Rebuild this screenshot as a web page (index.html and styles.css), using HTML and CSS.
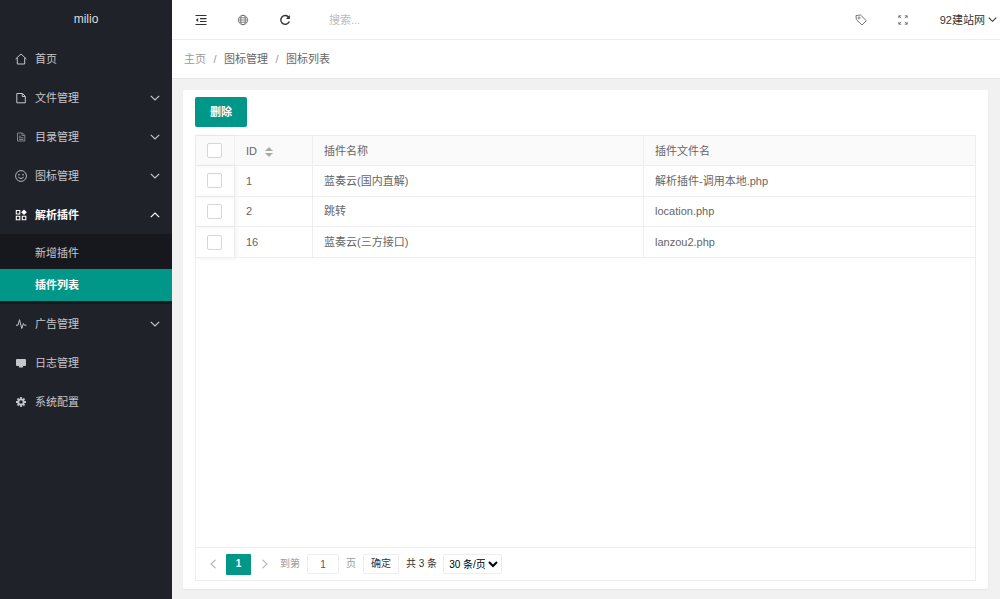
FILE: index.html
```html
<!DOCTYPE html>
<html lang="zh-CN">
<head>
<meta charset="utf-8">
<title>milio</title>
<link rel="stylesheet" href="styles.css">
</head>
<body>
<svg class="sprite" aria-hidden="true">
  <symbol id="down" viewBox="0 0 10 10"><path d="M.8 2.800 5 7l4.200-4.200" fill="none" stroke="currentColor" stroke-width="1.200"/></symbol>
  <symbol id="left" viewBox="0 0 10 10"><path d="M7.500.8 3 5l4.500 4.200" fill="none" stroke="currentColor" stroke-width="1.200"/></symbol>
</svg>
<div class="app">
  <aside class="sidebar">
    <div class="logo">milio</div>
    <nav>
      <a class="item" href="#"><svg class="icon" viewBox="0 0 12 12"><path d="M.6 6 6 1l5.400 5M2.300 5v6h7.400V5" fill="none" stroke="currentColor"/></svg><span>首页</span></a>
      <a class="item" href="#"><svg class="icon" viewBox="0 0 12 12"><path d="M1.800 1.500h5.700l2.800 2.800v6.500H1.800zM7.300 1.500v3h3" fill="none" stroke="currentColor"/></svg><span>文件管理</span><svg class="arrow"><use href="#down"/></svg></a>
      <a class="item" href="#"><svg class="icon dim" viewBox="0 0 12 12"><path d="M2.500 2h5l2.300 2.300V10H2.500zM7 2v2.500h2.500M4 5.200h2M4 6.800h4.500M4 8.400h4.500" fill="none" stroke="currentColor"/></svg><span>目录管理</span><svg class="arrow"><use href="#down"/></svg></a>
      <a class="item" href="#"><svg class="icon" viewBox="0 0 12 12"><circle cx="6" cy="6" r="5.400" fill="none" stroke="currentColor" stroke-width=".9"/><circle cx="4" cy="4.800" r=".8" fill="currentColor"/><circle cx="8" cy="4.800" r=".8" fill="currentColor"/><path d="M3.300 7.200q2.700 3 5.400 0" fill="none" stroke="currentColor" stroke-width=".9"/></svg><span>图标管理</span><svg class="arrow"><use href="#down"/></svg></a>
      <a class="item open" href="#"><svg class="icon" viewBox="0 0 12 12"><path d="M1.300 1.500h3.500V5H1.300zM1.300 7.300h3.500v3.500H1.300zM7.300 7.300h3.500v3.500H7.300z" fill="none" stroke="currentColor" stroke-width="1.100"/><path d="m9 .4 2.800 2.800L9 6 6.200 3.200z" fill="currentColor"/></svg><span>解析插件</span><svg class="arrow"><use href="#down"/></svg></a>
      <div class="submenu">
        <a href="#">新增插件</a>
        <a class="current" href="#">插件列表</a>
      </div>
      <a class="item" href="#"><svg class="icon" viewBox="0 0 12 12"><path d="M1 7.200h2L4.500 1.700l2.300 8.800 1.600-5 1 1.700h2" fill="none" stroke="currentColor" stroke-linejoin="round"/></svg><span>广告管理</span><svg class="arrow"><use href="#down"/></svg></a>
      <a class="item" href="#"><svg class="icon" viewBox="0 0 12 12"><path d="M2 2h8q1 0 1 1v5q0 1-1 1H8v1.500H4V9H2Q1 9 1 8V3q0-1 1-1z" fill="currentColor"/></svg><span>日志管理</span></a>
      <a class="item" href="#"><svg class="icon" viewBox="0 0 12 12"><circle cx="6" cy="6" r="2.700" fill="none" stroke="currentColor" stroke-width="1.800"/><path d="M6 1v2M6 9v2M1 6h2M9 6h2M2.500 2.500l1.300 1.300M8.200 8.200l1.300 1.300M2.500 9.500l1.300-1.300M8.200 3.800l1.300-1.300" stroke="currentColor" stroke-width="1.800"/></svg><span>系统配置</span></a>
    </nav>
  </aside>
  <div class="main">
    <header class="topbar">
      <button class="tool" aria-label="折叠菜单"><svg viewBox="0 0 12 12"><path d="M.5 1.500h11M5 4.600h6.500M5 7.500h6.500M.5 10.500h11" fill="none" stroke="currentColor" stroke-width="1.100"/><path d="M3.200 4v4L.8 6z" fill="currentColor"/></svg></button>
      <button class="tool soft" aria-label="网站"><svg viewBox="0 0 12 12"><g fill="none" stroke="currentColor" stroke-width=".8"><circle cx="6" cy="6" r="4.700"/><ellipse cx="6" cy="6" rx="2.300" ry="4.700"/><path d="M1.500 6h9M2.200 3.800h7.600M2.200 8.200h7.600"/></g></svg></button>
      <button class="tool" aria-label="刷新"><svg viewBox="0 0 12 12"><path d="M9.700 3.200A4.400 4.400 0 1 0 10.300 7.500" fill="none" stroke="currentColor" stroke-width="1.400"/><path d="M10.900 1v4H6.900z" fill="currentColor"/></svg></button>
      <input class="search" type="text" placeholder="搜索..." aria-label="搜索">
      <button class="tool soft" aria-label="标签"><svg viewBox="0 0 12 12"><path d="M1 1.500 5.600 1 11.300 6.700 7 11 1.300 5.500z" fill="none" stroke="currentColor" stroke-width=".9" stroke-linejoin="round"/><circle cx="4" cy="3.900" r="1" fill="none" stroke="currentColor" stroke-width=".8"/></svg></button>
      <button class="tool soft" aria-label="全屏"><svg viewBox="0 0 12 12"><path d="M1.800 4.200V1.800h2.400M7.800 1.800h2.400v2.400M10.200 7.800v2.400H7.800M4.200 10.200H1.800V7.800M2 2l2.200 2.200M10 2 7.800 4.200M10 10 7.800 7.800M2 10l2.200-2.200" fill="none" stroke="currentColor" stroke-width=".9"/></svg></button>
      <a class="user" href="#">92建站网<svg><use href="#down"/></svg></a>
    </header>
    <nav class="crumbs"><a class="home" href="#">主页</a><i>/</i><a href="#">图标管理</a><i>/</i><a href="#">图标列表</a></nav>
    <main class="card">
      <button class="delete">删除</button>
      <section class="grid">
        <table>
          <thead>
            <tr><th class="check"><input type="checkbox" aria-label="全选"></th><th class="id">ID<svg class="sort" viewBox="0 0 8 10"><path d="M4 0l4 4H0zM4 10l4-4H0z" fill="currentColor"/></svg></th><th>插件名称</th><th>插件文件名</th></tr>
          </thead>
          <tbody>
            <tr><td class="check"><input type="checkbox" aria-label="选择 1"></td><td>1</td><td>蓝奏云(国内直解)</td><td>解析插件-调用本地.php</td></tr>
            <tr><td class="check"><input type="checkbox" aria-label="选择 2"></td><td>2</td><td>跳转</td><td>location.php</td></tr>
            <tr><td class="check"><input type="checkbox" aria-label="选择 16"></td><td>16</td><td>蓝奏云(三方接口)</td><td>lanzou2.php</td></tr>
          </tbody>
        </table>
        <footer class="pager">
          <button class="step" aria-label="上一页"><svg><use href="#left"/></svg></button>
          <button class="page">1</button>
          <button class="step next" aria-label="下一页"><svg><use href="#left"/></svg></button>
          <label class="jump">到第<input type="text" value="1">页</label>
          <button class="go">确定</button>
          <span>共 3 条</span>
          <select aria-label="每页条数"><option>30 条/页</option></select>
        </footer>
      </section>
    </main>
  </div>
</div>
</body>
</html>
```
FILE: styles.css
```css
* { box-sizing: border-box; }
body {
  margin: 0;
  font: 11px/18px "Liberation Sans", "Noto Sans CJK SC", sans-serif;
  color: #666;
  background: #f1f1f1;
}
a { color: inherit; text-decoration: none; }
button, input, select { font: inherit; color: inherit; margin: 0; }
button { padding: 0; border: 0; background: none; cursor: pointer; }
.sprite { display: none; }

.app { display: flex; min-height: 100vh; }

.sidebar { flex: none; width: 172px; background: #20222a; color: #c6c7ca; }
.logo { height: 39px; line-height: 38px; text-align: center; font-size: 12px; color: #dcdcdd; }
.item { display: flex; align-items: center; height: 39px; padding: 0 12px 0 15px; }
.icon { width: 12px; height: 12px; margin-right: 8px; }
.dim { opacity: .6; }
.arrow { width: 10px; height: 10px; margin-left: auto; }
.open { color: #fff; font-weight: bold; }
.open .arrow { transform: rotate(180deg); }
.submenu { padding: 3px 0; background: #16181d; }
.submenu a { display: block; padding-left: 35px; line-height: 32px; }
.submenu .current { background: #009688; color: #fff; font-weight: bold; }

.main { flex: 1; min-width: 0; display: flex; flex-direction: column; }
.topbar {
  display: flex;
  align-items: center;
  height: 40px;
  padding: 0 3px 0 8px;
  background: #fff;
  border-bottom: 1px solid #eee;
  color: #333;
}
.tool { display: flex; justify-content: center; width: 42px; }
.tool svg { width: 12px; height: 12px; }
.soft { color: #666; }
.search { flex: 1; min-width: 0; padding: 0 0 0 23px; border: 0; outline: 0; background: none; }
.search::placeholder { color: #bbb; }
.user { display: flex; align-items: center; gap: 3px; padding-left: 16px; }
.user svg { width: 9px; height: 9px; }

.crumbs { height: 39px; padding-left: 12px; line-height: 38px; background: #fff; border-bottom: 1px solid #e8e8e8; }
.crumbs i { display: inline-block; width: 18px; text-align: center; font-style: normal; color: #999; }
.home { color: #999; }

.card {
  flex: 1;
  display: flex;
  flex-direction: column;
  align-items: flex-start;
  gap: 8px;
  margin: 11px 12px 10px 11px;
  padding: 7px 12px 8px;
  background: #fff;
  border-radius: 2px;
  box-shadow: 0 1px 2px rgba(0, 0, 0, .05);
}
.delete { width: 52px; height: 30px; border-radius: 2px; background: #009688; color: #fff; font-weight: bold; }
.grid { flex: 1; align-self: stretch; display: flex; flex-direction: column; border: 1px solid #eee; }

table { width: 100%; height: 122px; table-layout: fixed; border-collapse: separate; border-spacing: 0; }
th, td { height: 30px; padding: 0 11px; text-align: left; font-weight: normal; border-right: 1px solid #eee; border-bottom: 1px solid #eee; }
th { background: #fafafa; }
th:last-child, td:last-child { border-right: 0; }
.check { width: 39px; box-shadow: 1px 0 4px rgba(0, 0, 0, .07); }
.id { width: 78px; }
.check input { display: block; appearance: none; width: 15px; height: 15px; border: 1px solid #d6d6d6; border-radius: 2px; background: #fff; }
.sort { width: 8px; height: 10px; margin-left: 8px; vertical-align: -2px; color: #aaa; }

.pager { display: flex; align-items: center; height: 33px; margin-top: auto; padding: 0 3px; border-top: 1px solid #eee; font-size: 10px; color: #333; }
.step { display: flex; justify-content: center; width: 27px; color: #bbb; }
.step svg { width: 10px; height: 10px; }
.next svg { transform: rotate(180deg); }
.page { width: 25px; height: 21px; border-radius: 1px; background: #009688; color: #fff; font-weight: bold; }
.jump { display: flex; align-items: center; gap: 7px; margin-left: 2px; color: #999; }
.jump input { width: 32px; height: 20px; padding: 0; border: 1px solid #eee; border-radius: 2px; text-align: center; color: #555; }
.go { width: 36px; height: 20px; margin: 0 7px; border: 1px solid #eee; border-radius: 2px; }
select { width: 59px; height: 20px; margin-left: 6px; padding: 0 0 0 1px; border: 1px solid #eee; border-radius: 2px; background: #fff; color: #000; }
```
